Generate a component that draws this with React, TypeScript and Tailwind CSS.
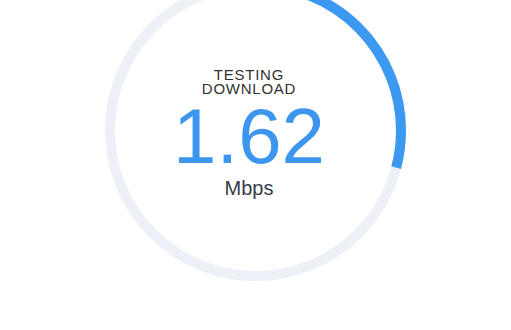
import React from "react";

export default function App() {
  const r = 145.5;
  const c = 2 * Math.PI * r;
  const frac = 0.291;
  return (
    <div className="w-[511px] h-[330px] overflow-hidden bg-white" style={{ fontFamily: '"Liberation Sans", Arial, sans-serif' }}>
      <div className="relative w-[301px] h-[301px] mx-auto mt-[-20px]">
        <svg className="absolute inset-0" width="301" height="301" viewBox="0 0 301 301">
          <circle cx="150.5" cy="150.5" r={r} fill="none" stroke="#edf0f6" strokeWidth="10" />
          <circle
            cx="150.5"
            cy="150.5"
            r={r}
            fill="none"
            stroke="#3b99f2"
            strokeWidth="10"
            strokeDasharray={`${c * frac} ${c}`}
            transform="rotate(-90 150.5 150.5)"
          />
        </svg>
        <div className="relative flex flex-col items-center pt-[88px] pr-[13px]">
          <div className="text-[15px] leading-[14px] tracking-[0.75px] text-[#333333] text-center uppercase">
            <div>Testing</div>
            <div>Download</div>
          </div>
          <div className="text-[78px] leading-[78px] text-[#3d96ee] mt-[1px]">1.62</div>
          <div className="text-[20px] leading-[24px] text-[#363b48] mt-[1px]">Mbps</div>
        </div>
      </div>
    </div>
  );
}
